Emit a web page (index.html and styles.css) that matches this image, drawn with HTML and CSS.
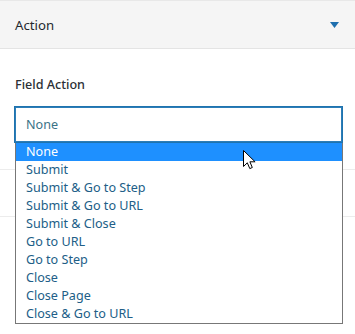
FILE: index.html
```html
<!DOCTYPE html>
<html>
<head>
<meta charset="utf-8">
<link rel="stylesheet" href="styles.css">
</head>
<body>
<div class="page">
  <div class="panel-header">
    <span class="panel-title">Action</span>
    <svg class="caret" width="9" height="6" viewBox="0 0 9 6"><path d="M0 0H9L4.5 6Z" fill="#1e6fae"/></svg>
  </div>
  <div class="field">
    <div class="field-label">Field Action</div>
    <div class="select">None</div>
  </div>
  <div class="next-section"></div>

  <ul class="dropdown">
    <li class="selected">None</li>
    <li>Submit</li>
    <li>Submit &amp; Go to Step</li>
    <li>Submit &amp; Go to URL</li>
    <li>Submit &amp; Close</li>
    <li>Go to URL</li>
    <li>Go to Step</li>
    <li>Close</li>
    <li>Close Page</li>
    <li>Close &amp; Go to URL</li>
  </ul>
  <svg class="cursor" width="13" height="20" viewBox="0 0 13 20">
    <path d="M0.5 0.5V16.5L4.3 12.8L6.8 18.6L9.3 17.5L6.9 11.8H12.1Z" fill="#fff" stroke="#000" stroke-width="1" stroke-linejoin="miter"/>
  </svg>
</div>
</body>
</html>
```
FILE: styles.css
```css
html, body {
  margin: 0;
  padding: 0;
  background: #fff;
}
body {
  font-family: "Noto Sans", "Open Sans", "DejaVu Sans", sans-serif;
  font-size: 12.6px;
  color: #23282d;
}
.page {
  position: relative;
  width: 355px;
  height: 334px;
  overflow: hidden;
}
.panel-header {
  box-sizing: border-box;
  height: 49px;
  background: #f5f5f5;
  border-top: 1px solid #e8e8e8;
  border-bottom: 1px solid #e4e4e4;
  display: flex;
  align-items: center;
  justify-content: space-between;
  padding: 0 16px 0 15px;
}
.panel-title {
  font-size: 13.2px;
  color: #23282d;
}
.caret {
  display: block;
  margin-top: 1px;
}
.field {
  box-sizing: border-box;
  height: 121px;
  padding: 27px 12px 0 14px;
  border-bottom: 1px solid #ececec;
}
.field-label {
  font-size: 12.6px;
  line-height: 18px;
  font-weight: 500;
  color: #2b3035;
  padding-left: 1px;
}
.select {
  box-sizing: border-box;
  margin-top: 12px;
  height: 37px;
  border: 1px solid #1f73ae;
  box-shadow: inset 0 0 0 1px #2c7db8;
  padding: 0 11px;
  line-height: 35px;
  color: #3a7387;
  font-size: 12.6px;
}
.next-section {
  height: 46px;
  border-bottom: 1px solid #ececec;
}
.dropdown {
  position: absolute;
  left: 15px;
  top: 143px;
  width: 328px;
  box-sizing: border-box;
  margin: 0;
  padding: 0;
  list-style: none;
  background: #fff;
  border: 1px solid #777;
  border-top: 0;
}
.dropdown li {
  height: 18px;
  line-height: 18px;
  padding-left: 10px;
  color: #215e87;
  font-size: 12.6px;
  white-space: nowrap;
}
.dropdown li.selected {
  background: #1e90ff;
  color: #fff;
}
.cursor {
  position: absolute;
  left: 243px;
  top: 150px;
}
```
